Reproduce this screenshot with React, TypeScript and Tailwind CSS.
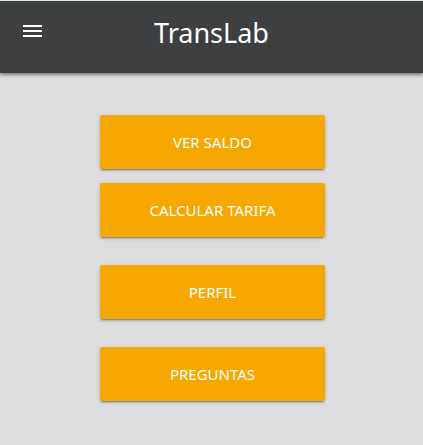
const elevation =
  "shadow-[0_2px_2px_0_rgba(0,0,0,0.14),0_1px_5px_0_rgba(0,0,0,0.12),0_3px_1px_-2px_rgba(0,0,0,0.2)]";

function MenuButton({ label }: { label: string }) {
  return (
    <button
      type="button"
      className={`h-[54px] w-full rounded-xs bg-[#f7a800] text-[15px] leading-6 text-white uppercase ${elevation}`}
    >
      {label}
    </button>
  );
}

export default function App() {
  return (
    <div className="min-h-screen bg-[#dcdddf] font-['Noto_Sans',sans-serif]">
      <header className="grid h-[73px] grid-cols-[1fr_auto_1fr] items-start border-t border-[#dde5e5] bg-[#3e3f41] bg-clip-padding px-5 shadow-[0_2px_3px_0_rgba(0,0,0,0.45)]">
        <button type="button" aria-label="Menú" className="mt-[18px] size-6 text-white">
          <svg viewBox="0 0 24 24" className="size-6" fill="currentColor" aria-hidden="true">
            <path d="M3 6h19v2H3zM3 11h19v2H3zM3 16h19v2H3z" />
          </svg>
        </button>
        <h1 className="mt-3 text-[27px] leading-10 text-white">TransLab</h1>
      </header>
      <main className="flex justify-center pt-[42px] pb-11 pl-0.5">
        <nav className="flex w-[225px] flex-col gap-7">
          <div className="flex flex-col gap-3.5">
            <MenuButton label="Ver saldo" />
            <MenuButton label="Calcular tarifa" />
          </div>
          <MenuButton label="Perfil" />
          <MenuButton label="Preguntas" />
        </nav>
      </main>
    </div>
  );
}
